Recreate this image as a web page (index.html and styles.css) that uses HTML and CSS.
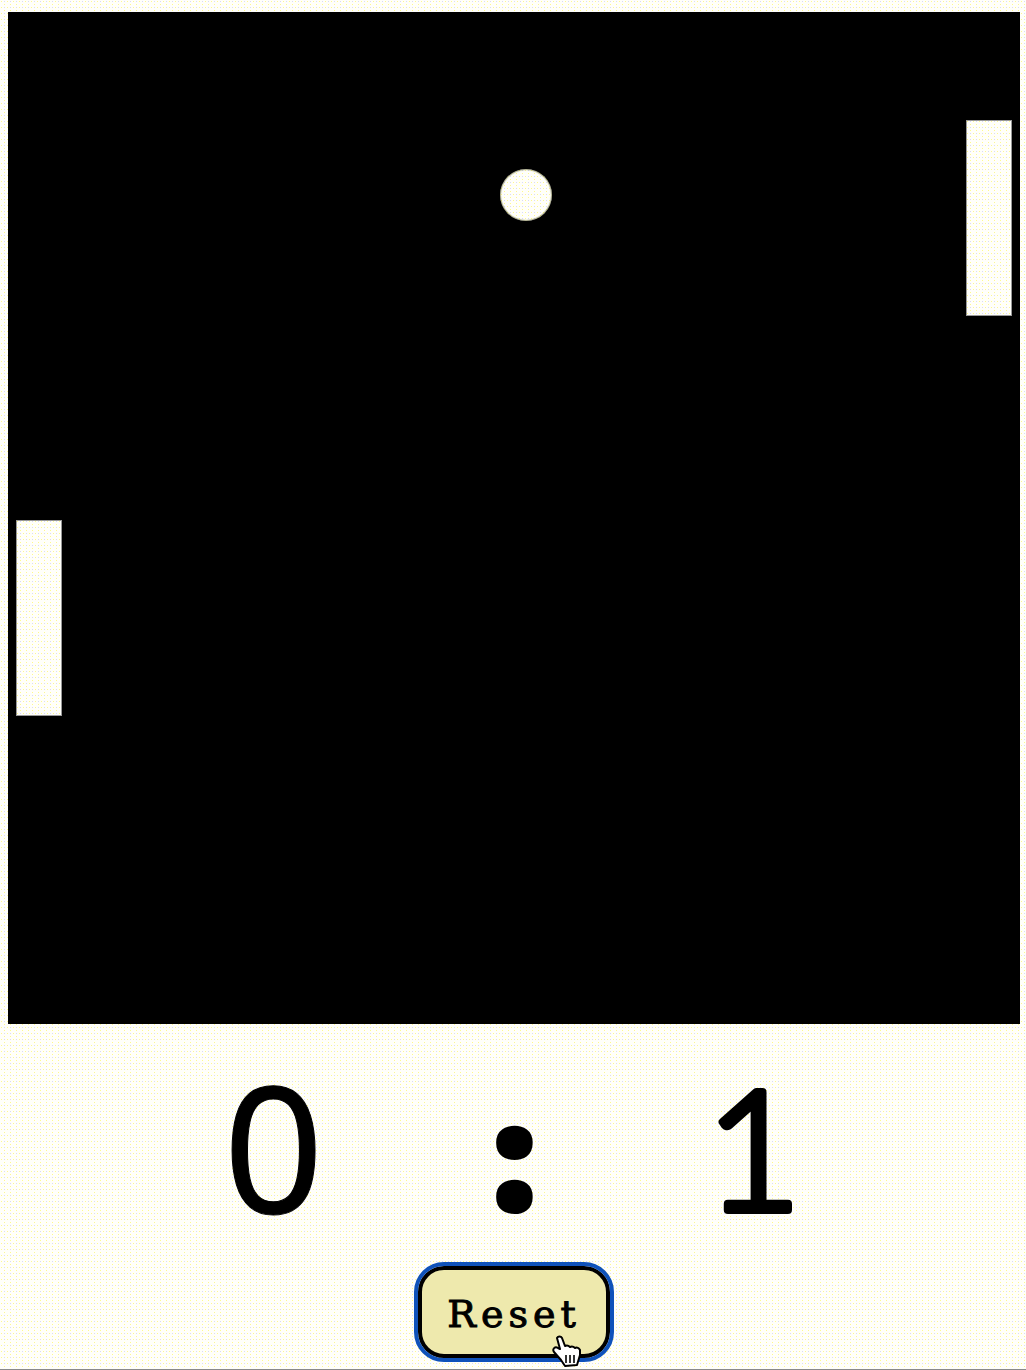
FILE: index.html
```html
<!DOCTYPE html>
<html lang="en">
<head>
<meta charset="utf-8">
<title>Pong</title>
<link rel="stylesheet" href="styles.css">
</head>
<body>
<main class="app">
  <section class="court">
    <div class="paddle paddle-left"></div>
    <div class="paddle paddle-right"></div>
    <div class="ball"></div>
  </section>
  <div class="score">
    <svg class="digit" viewBox="0 0 121 242"><text class="glyph zero" x="60.5" y="189">0</text></svg>
    <svg class="digit" viewBox="0 0 121 242"><text class="glyph colon" x="60.5" y="184">:</text></svg>
    <svg class="digit" viewBox="0 0 121 242"><text class="glyph one" x="58.5" y="186">1</text></svg>
  </div>
  <div class="controls">
    <button class="reset" type="button">Reset</button>
    <svg class="cursor" width="30" height="34" viewBox="0 0 30 34">
      <path d="M5 4C6 2 9 2 10 4L13 12C15 11 16 11 18 13C20 12 21 12 23 14C25 13 27 14 28 16L28 21L25 31L13 32L9 26L2 18C0 15 3 12 6 14L8 15L5 4Z" fill="#fff" stroke="#000" stroke-width="2" stroke-linejoin="round"/>
      <path d="M14 21v8M18 21v8M22 21v8" stroke="#000" stroke-width="1.6" fill="none"/>
    </svg>
  </div>
</main>
</body>
</html>
```
FILE: styles.css
```css
html, body { margin: 0; padding: 0; }
body {
  height: 1369px;
  overflow: hidden;
  border-bottom: 1px solid #8a8a8a;
}
body, .paddle, .ball {
  background-color: #fffffa;
  background-image:
    radial-gradient(circle at 1.5px 1.5px, #fff98c 0.8px, transparent 1px),
    radial-gradient(circle at 4.5px 4.5px, #fff98c 0.8px, transparent 1px),
    radial-gradient(circle at 4.5px 1.5px, #d8d8f8 0.7px, transparent 1px);
  background-size: 6px 6px;
}
.app {
  display: flex;
  flex-direction: column;
  align-items: center;
  padding: 12px 6px 0 8px;
}
.court {
  position: relative;
  width: 1012px;
  height: 1012px;
  background: #000;
  flex: none;
}
.paddle, .ball { position: absolute; }
.paddle { width: 46px; height: 196px; box-shadow: inset 0 0 0 1px #999; }
.paddle-left { left: 8px; top: 508px; }
.paddle-right { left: 958px; top: 108px; }
.ball {
  left: 492px;
  top: 157px;
  width: 52px;
  height: 52px;
  border-radius: 50%;
  box-shadow: inset 0 0 1px 1px rgba(120, 120, 60, 0.6);
}
.score {
  display: flex;
  justify-content: center;
  gap: 120px;
  height: 242px;
}
.digit { width: 121px; height: 242px; }
.glyph { text-anchor: middle; fill: #000; stroke: #000; stroke-linejoin: round; }
.zero { font: 400 175px "Noto Sans", sans-serif; stroke-width: 1px; }
.colon { font: 800 140px "Open Sans", sans-serif; stroke-width: 8px; }
.one { font: 300 165px "Lato", sans-serif; stroke-width: 8px; }
.controls { position: relative; display: flex; justify-content: center; }
.reset {
  box-sizing: border-box;
  width: 192px;
  height: 92px;
  border: 4px solid #000;
  border-radius: 26px;
  outline: 4px solid #0f52ba;
  outline-offset: 0;
  background-color: #eee9ad;
  font: 400 38px/1 "DejaVu Serif", serif;
  -webkit-text-stroke: 1px #000;
  letter-spacing: 5px;
  color: #000;
  padding: 4px 0 0;
}
.cursor { position: absolute; left: 134px; top: 68px; }
```
